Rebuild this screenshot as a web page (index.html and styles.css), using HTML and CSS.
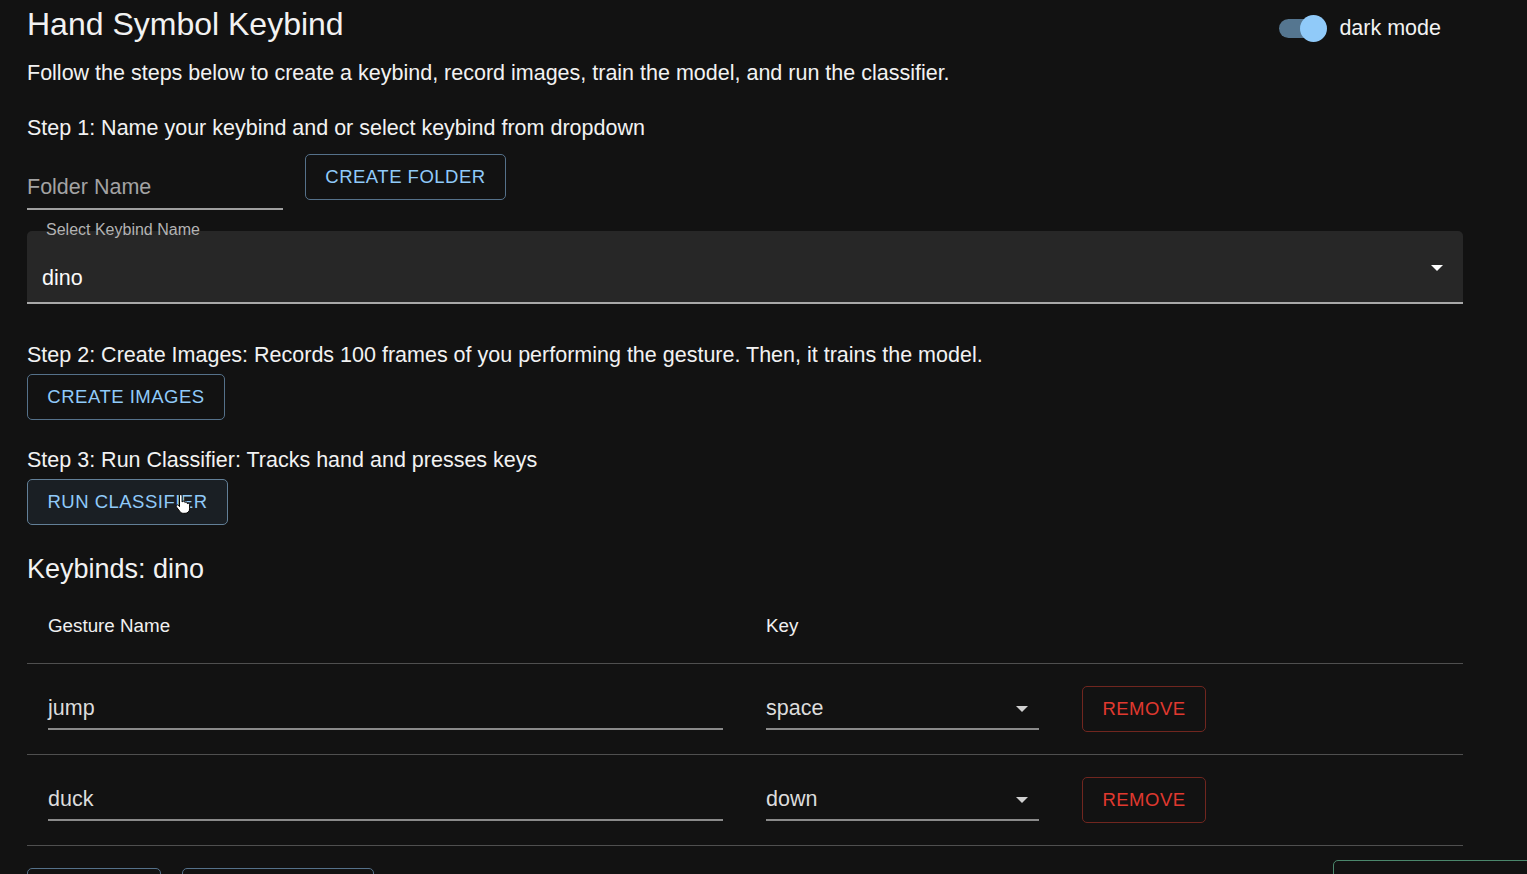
FILE: index.html
```html
<!DOCTYPE html>
<html lang="en">
<head>
<meta charset="utf-8">
<title>Hand Symbol Keybind</title>
<link rel="stylesheet" href="styles.css">
</head>
<body>
<div class="page">
  <header class="header">
    <h1 class="title">Hand Symbol Keybind</h1>
    <label class="mode">
      <span class="switch"><span class="track"></span><span class="thumb"></span></span>
      <span class="mode-label">dark mode</span>
    </label>
  </header>

  <p class="subtitle">Follow the steps below to create a keybind, record images, train the model, and run the classifier.</p>

  <p class="step step1">Step 1: Name your keybind and or select keybind from dropdown</p>
  <div class="folder-row">
    <div class="text-input folder-input"><span class="placeholder">Folder Name</span></div>
    <button class="btn btn-primary folder-btn">CREATE FOLDER</button>
  </div>

  <div class="filled-select">
    <span class="filled-label">Select Keybind Name</span>
    <span class="filled-value">dino</span>
    <span class="caret caret-main"></span>
  </div>

  <p class="step step2">Step 2: Create Images: Records 100 frames of you performing the gesture. Then, it trains the model.</p>
  <button class="btn btn-primary step-btn">CREATE IMAGES</button>

  <p class="step step3">Step 3: Run Classifier: Tracks hand and presses keys</p>
  <button class="btn btn-primary step-btn btn-hover">RUN CLASSIFIER
    <svg class="cursor" width="17" height="22" viewBox="0 0 17 22"><path d="M5.5 1.8a1.3 1.3 0 0 1 2.6 0v6.2l.3-.1a1.3 1.3 0 0 1 2.5.4v.3a1.3 1.3 0 0 1 2.4.6v.5a1.3 1.3 0 0 1 2.3.8v4.3c0 2.7-1.9 4.5-4.5 4.5H9.3c-1.5 0-2.6-.6-3.4-1.8L2.3 12.8a1.3 1.3 0 0 1 2-1.6l1.2 1.4z" fill="#fff" stroke="#000" stroke-width="1"/></svg>
  </button>

  <h2 class="keybinds">Keybinds: dino</h2>

  <div class="table">
    <div class="trow thead">
      <div class="cell">Gesture Name</div>
      <div class="cell">Key</div>
    </div>
    <div class="trow">
      <div class="cell"><div class="text-input gesture-input">jump</div></div>
      <div class="cell key-cell">
        <div class="text-input key-select">space<span class="caret caret-row"></span></div>
        <button class="btn btn-error">REMOVE</button>
      </div>
    </div>
    <div class="trow">
      <div class="cell"><div class="text-input gesture-input">duck</div></div>
      <div class="cell key-cell">
        <div class="text-input key-select">down<span class="caret caret-row"></span></div>
        <button class="btn btn-error">REMOVE</button>
      </div>
    </div>
  </div>

  <div class="bottom-row">
    <button class="btn btn-primary bottom-a"></button>
    <button class="btn btn-primary bottom-b"></button>
    <button class="btn btn-success bottom-c"></button>
  </div>
</div>
</body>
</html>
```

FILE: styles.css
```css
html, body {
  margin: 0;
  padding: 0;
  background: #121212;
  overflow: hidden;
  height: 100%;
}
body {
  font-family: "Liberation Sans", Arial, sans-serif;
  color: #f2f2f2;
}
.page {
  width: 1436px;
  padding: 0 0 0 27px;
}
.header {
  display: flex;
  justify-content: space-between;
  align-items: flex-start;
  padding-top: 4px;
  height: 40px;
}
.title {
  margin: 0;
  font-size: 32px;
  line-height: 40px;
  font-weight: 400;
}
.mode {
  display: flex;
  align-items: center;
  height: 28px;
  margin-top: 10px;
  margin-right: 22px;
}
.switch {
  position: relative;
  width: 48px;
  height: 28px;
  margin-right: 12px;
}
.track {
  position: absolute;
  left: 0;
  top: 5px;
  width: 44px;
  height: 19px;
  border-radius: 10px;
  background: #557690;
}
.thumb {
  position: absolute;
  left: 21px;
  top: 1px;
  width: 27px;
  height: 27px;
  border-radius: 50%;
  background: #90caf9;
}
.mode-label {
  font-size: 21.5px;
  line-height: 28px;
}
.subtitle, .step {
  margin: 0;
  font-size: 21.5px;
  line-height: 30px;
}
.subtitle { margin-top: 13.5px; }
.step1 { margin-top: 25px; }
.folder-row {
  display: flex;
  align-items: flex-start;
  margin-top: 11.5px;
}
.text-input {
  position: relative;
  font-size: 21.5px;
  line-height: 30px;
  box-sizing: border-box;
}
.folder-input {
  width: 256px;
  padding: 17.5px 0 6.5px;
  border-bottom: 2px solid #a0a0a0;
}
.placeholder { color: #a3a3a3; }
.btn {
  font-family: "Liberation Sans", Arial, sans-serif;
  font-size: 18.5px;
  letter-spacing: 0.5px;
  height: 46px;
  padding: 0 19px;
  border-radius: 5px;
  background: transparent;
  box-sizing: border-box;
  cursor: pointer;
}
.btn-primary {
  color: #90caf9;
  border: 1px solid #55718a;
}
.btn-hover {
  position: relative;
  background: #1a1f24;
  border-color: #627f97;
}
.btn-error {
  color: #e0392f;
  border: 1px solid #70261f;
}
.btn-success {
  border: 1px solid #4b876c;
}
.folder-btn {
  margin-left: 22px;
  width: 201px;
}
.filled-select {
  position: relative;
  margin-top: 21px;
  height: 73px;
  box-sizing: border-box;
  background: #272727;
  border-radius: 5px 5px 0 0;
  border-bottom: 2px solid #a8a8a8;
  padding: 31.5px 15px 0;
}
.filled-label {
  position: absolute;
  left: 19px;
  top: -11.5px;
  font-size: 16px;
  line-height: 20px;
  color: #b3b3b3;
}
.filled-value {
  font-size: 21.5px;
  line-height: 30px;
  color: #fafafa;
}
.caret {
  position: absolute;
  width: 0;
  height: 0;
  border-left: 6px solid transparent;
  border-right: 6px solid transparent;
}
.caret-main {
  right: 20px;
  top: 34px;
  border-top: 6px solid #ffffff;
}
.step2 { margin-top: 35.5px; }
.step3 { margin-top: 24.5px; }
.step-btn {
  display: block;
  margin-top: 4.5px;
}
.step2 + .step-btn { width: 198px; }
.btn-hover { width: 201px; }
.cursor {
  position: absolute;
  left: 146px;
  top: 14px;
}
.keybinds {
  margin: 26px 0 0;
  font-size: 27px;
  line-height: 36px;
  font-weight: 400;
}
.table {
  width: 1436px;
}
.trow {
  display: grid;
  grid-template-columns: 718px 1fr;
  border-bottom: 1px solid #4f4f4f;
}
.cell {
  padding: 28.5px 21px 24px;
  min-width: 0;
}
.thead .cell {
  padding: 26px 21px 24px;
  font-size: 18.8px;
  line-height: 26px;
  color: #f0f0f0;
}
.gesture-input {
  width: 675px;
  padding-bottom: 5.5px;
  border-bottom: 2px solid #8a8a8a;
  color: #dcdcdc;
}
.key-cell {
  display: flex;
  align-items: flex-start;
}
.key-select {
  width: 273px;
  padding-bottom: 5.5px;
  border-bottom: 2px solid #8a8a8a;
  color: #dcdcdc;
}
.caret-row {
  right: 11px;
  top: 13px;
  border-top: 6px solid #d0d0d0;
}
.key-cell .btn-error {
  margin: -6.5px 0 -2px 43px;
  width: 124px;
}
.bottom-row {
  display: flex;
  align-items: flex-start;
  margin-top: 22px;
  margin-right: -120px;
}
.bottom-a { width: 134px; }
.bottom-b { width: 192px; margin-left: 21px; }
.bottom-c { width: 250px; margin-left: auto; margin-top: -8px; }
```
